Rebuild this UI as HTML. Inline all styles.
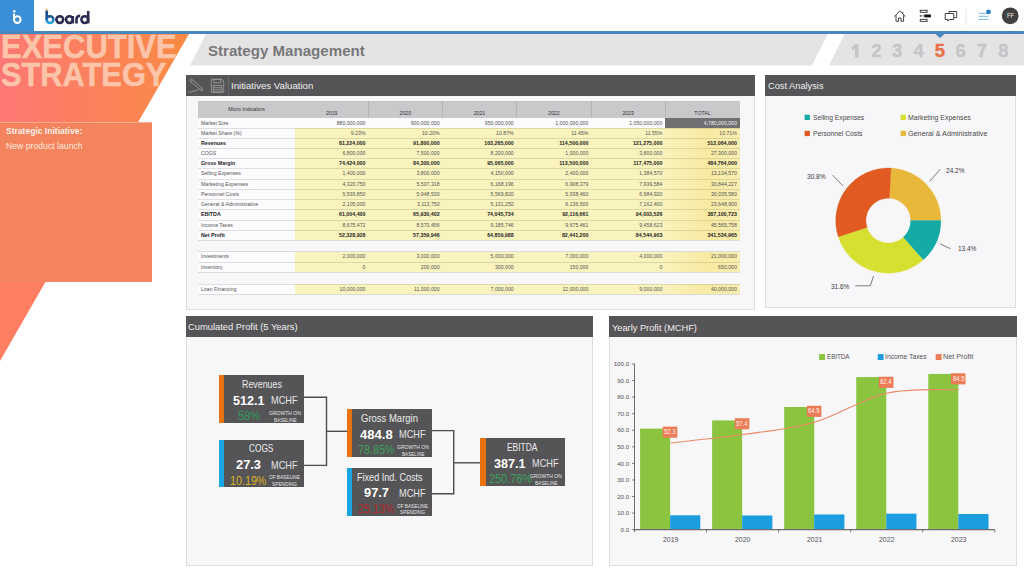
<!DOCTYPE html><html><head><meta charset="utf-8"><style>
*{margin:0;padding:0;box-sizing:border-box}
html,body{width:1024px;height:576px;overflow:hidden;background:#fff;font-family:"Liberation Sans",sans-serif;position:relative}
.a{position:absolute;white-space:nowrap}
.ph{position:absolute;background:#555457;color:#f2f2f2;font-size:9.4px;line-height:22.2px;padding-left:2.5px;white-space:nowrap}
.pb{position:absolute;background:#f7f6f8;border:1px solid #dedede;border-top:none}
.t{position:absolute;white-space:nowrap;font-size:5.2px;line-height:10px;color:#555}
.tb{font-weight:bold;color:#252525;font-size:5.3px}
.kb{position:absolute;background:#545355}
.kb .bar{position:absolute;left:0;top:0;bottom:0;width:5.5px}
</style></head><body>
<svg class="a" style="left:0;top:0" width="1024" height="576">
<defs><linearGradient id="lg" x1="0" y1="0" x2="1" y2="0">
<stop offset="0.04" stop-color="#fd7872"/><stop offset="0.95" stop-color="#f98a46"/></linearGradient></defs>
<polygon points="0,34 189,34 138.2,122 0,122" fill="url(#lg)"/>
<polygon points="0,281 46,281 0,361" fill="#fe7e61"/>
<polygon points="206,34 828,34 812,65.5 190,65.5" fill="#e5e4e4"/>
<polygon points="844.5,34 1024,34 1024,65.5 829,65.5" fill="#e5e4e4"/>
</svg>
<div class="a" style="left:1.10px;top:23.70px;font-size:32.5px;line-height:46px;color:#fcc4a9;font-weight:bold;transform:scaleX(0.9535);transform-origin:0 0;-webkit-text-stroke:0.5px #fcc4a9;">EXECUTIVE</div>
<div class="a" style="left:0.60px;top:51.50px;font-size:32.5px;line-height:46px;color:#fcc4a9;font-weight:bold;transform:scaleX(0.9477);transform-origin:0 0;-webkit-text-stroke:0.5px #fcc4a9;">STRATEGY</div>
<div class="a" style="left:0;top:122px;width:152px;height:160px;background:#f3845e;border-top:1px solid #f9ad8e"></div>
<div class="a" style="left:6.20px;top:125.00px;font-size:8.7px;line-height:13px;color:#fff2ea;font-weight:bold;transform:scaleX(0.9817);transform-origin:0 0;">Strategic Initiative:</div>
<div class="a" style="left:6.30px;top:139.90px;font-size:8.6px;line-height:13px;color:#fee9de;transform:scaleX(1.0089);transform-origin:0 0;">New product launch</div>
<div class="a" style="left:0;top:0;width:1024px;height:32px;background:#fff"></div>
<div class="a" style="left:0;top:0;width:33.5px;height:32px;background:#3a8fd6"></div>
<div class="a" style="left:0;top:31.4px;width:1024px;height:2.8px;background:#4587be"></div>
<svg class="a" style="left:0;top:0" width="1024" height="40">
<g fill="none" stroke="#fff" stroke-width="2">
<circle cx="17.3" cy="19.6" r="3.3"/><line x1="14" y1="13.5" x2="14" y2="20"/></g>
<circle cx="14.3" cy="11.3" r="1.2" fill="#fff"/>
<polygon points="935.5,34 944.5,34 940,38" fill="#4587be"/>
</svg>
<svg class="a" style="left:0;top:0" width="1024" height="34">
<defs><linearGradient id="bg1" x1="0" y1="0" x2="0" y2="1"><stop offset="0" stop-color="#1f4f8f"/><stop offset="1" stop-color="#2aa8e0"/></linearGradient></defs>
<g fill="none" stroke-width="2.6">
<line x1="46.7" y1="10.5" x2="46.7" y2="20" stroke="#1f4f8f"/>
<circle cx="50" cy="19.6" r="3.4" stroke="url(#bg1)"/>
<circle cx="59.8" cy="19.6" r="3.4" stroke="#2b2d4f"/>
<circle cx="69.4" cy="19.6" r="3.4" stroke="#2b2d4f"/>
<line x1="72.8" y1="16" x2="72.8" y2="23.4" stroke="#2b2d4f"/>
<path d="M76.5 23.4 V19.2 Q76.5 15.8 80.2 15.8" stroke="#2b2d4f"/>
<circle cx="84.8" cy="19.6" r="3.4" stroke="#2b2d4f"/>
<line x1="88.2" y1="11" x2="88.2" y2="23.4" stroke="#2b2d4f"/>
</g>
<circle cx="46.6" cy="10" r="1" fill="#f0903a"/>
<g fill="none" stroke="#444" stroke-width="1">
<path d="M894.3 16.7 L899.8 10.8 L905.4 16.7"/>
<path d="M896 15.2 V21.3 H898.5 V18 H901 V21.3 H903.6 V15.2"/>
<line x1="902.8" y1="11.8" x2="902.8" y2="13.7"/>
<rect x="920.3" y="10.3" width="6.8" height="2"/>
<rect x="920.3" y="19.4" width="6.8" height="2"/>
<line x1="921" y1="15.9" x2="924" y2="15.9" stroke-width="0.7"/>
<path d="M949 13.4 V11.5 H956.7 V17.6 H954"/>
<path d="M945.2 13.5 H953.7 V19.5 H949.3 L947.8 21.2 V19.5 H945.2 Z"/>
</g>
<rect x="924.3" y="14.5" width="6.6" height="2.9" fill="#111"/><circle cx="920.4" cy="15.9" r="0.8" fill="#444"/>
<line x1="966" y1="9" x2="966" y2="25" stroke="#e2e2e2" stroke-width="1"/>
<g stroke="#6bb0e3" stroke-width="0.9"><line x1="978.4" y1="13.3" x2="987" y2="13.3"/><line x1="978.4" y1="16.3" x2="988.5" y2="16.3"/><line x1="978.4" y1="19.4" x2="988.5" y2="19.4"/></g>
<circle cx="988.5" cy="11.9" r="2.4" fill="#2a7fc6"/>
<circle cx="1010.2" cy="15.8" r="8.4" fill="#404040"/>
</svg>
<div class="a" style="left:1007.00px;top:10.20px;font-size:7.2px;line-height:11px;color:#efefef;transform:scaleX(0.8197);transform-origin:0 0;">FF</div>
<div class="a" style="left:208.40px;top:40.70px;font-size:14.6px;line-height:21px;color:#78787a;font-weight:bold;transform:scaleX(1.0337);transform-origin:0 0;">Strategy Management</div>
<svg class="a" style="left:0;top:0" width="1024" height="70"><polygon points="854.9,44.3 858.5,44.3 858.5,57.6 854.9,57.6 854.9,48.6 852.1,50.5 851.7,47.3" fill="#c5c5c7"/></svg>
<div class="a" style="left:871.37px;top:38.10px;font-size:18.5px;line-height:26px;color:#c5c5c7;font-weight:bold;-webkit-text-stroke:0.35px #c5c5c7;">2</div>
<div class="a" style="left:892.07px;top:38.10px;font-size:18.5px;line-height:26px;color:#c5c5c7;font-weight:bold;-webkit-text-stroke:0.35px #c5c5c7;">3</div>
<div class="a" style="left:913.47px;top:38.10px;font-size:18.5px;line-height:26px;color:#c5c5c7;font-weight:bold;-webkit-text-stroke:0.35px #c5c5c7;">4</div>
<div class="a" style="left:934.87px;top:38.10px;font-size:18.5px;line-height:26px;color:#e9704a;font-weight:bold;-webkit-text-stroke:0.35px #e9704a;">5</div>
<div class="a" style="left:955.57px;top:38.10px;font-size:18.5px;line-height:26px;color:#c5c5c7;font-weight:bold;-webkit-text-stroke:0.35px #c5c5c7;">6</div>
<div class="a" style="left:976.77px;top:38.10px;font-size:18.5px;line-height:26px;color:#c5c5c7;font-weight:bold;-webkit-text-stroke:0.35px #c5c5c7;">7</div>
<div class="a" style="left:998.27px;top:38.10px;font-size:18.5px;line-height:26px;color:#c5c5c7;font-weight:bold;-webkit-text-stroke:0.35px #c5c5c7;">8</div>
<div class="ph" style="left:186px;top:75px;width:569px;height:21px"></div>
<div class="pb" style="left:186px;top:96px;width:569px;height:213.5px"></div>
<div class="ph" style="left:765px;top:75px;width:251px;height:21px"></div>
<div class="pb" style="left:765px;top:96px;width:251px;height:212px"></div>
<div class="ph" style="left:186px;top:316.3px;width:407px;height:20.7px"></div>
<div class="pb" style="left:186px;top:337px;width:407px;height:228.5px"></div>
<div class="ph" style="left:609px;top:316.3px;width:408px;height:20.7px"></div>
<div class="pb" style="left:609px;top:337px;width:408px;height:228.5px"></div>
<div class="a" style="left:231.40px;top:79.30px;font-size:9.9px;line-height:14px;color:#f0f0f0;transform:scaleX(0.9758);transform-origin:0 0;">Initiatives Valuation</div>
<div class="a" style="left:768.30px;top:79.20px;font-size:9.9px;line-height:14px;color:#f0f0f0;transform:scaleX(0.9369);transform-origin:0 0;">Cost Analysis</div>
<div class="a" style="left:188.40px;top:320.40px;font-size:9.9px;line-height:14px;color:#f0f0f0;transform:scaleX(0.9464);transform-origin:0 0;">Cumulated Profit (5 Years)</div>
<div class="a" style="left:612.20px;top:320.50px;font-size:9.9px;line-height:14px;color:#f0f0f0;transform:scaleX(0.9359);transform-origin:0 0;">Yearly Profit (MCHF)</div>
<svg class="a" style="left:186px;top:75px" width="50" height="21">
<g fill="none" stroke="#9a9a9a" stroke-width="0.9">
<path d="M3.5 5.5 L5.3 3.8 L16.6 13.6 L16.5 15.4 L14.8 15.3 Z"/>
<line x1="4.5" y1="7" x2="6.6" y2="5"/>
<line x1="14.6" y1="13" x2="13" y2="14.6"/>
<path d="M2.5 17.5 L12 15"/>
<path d="M25.3 4.3 H36 L37.7 6 V17.2 H25.3 Z"/>
<rect x="28" y="4.3" width="6.8" height="3.5"/>
<rect x="27.3" y="10.5" width="8.5" height="6.7"/>
<line x1="28" y1="12.7" x2="35" y2="12.7"/><line x1="28" y1="14.8" x2="35" y2="14.8"/>
</g>
<line x1="42.5" y1="0" x2="42.5" y2="21" stroke="#6a696c" stroke-width="1"/>
</svg>
<div class="a" style="left:198px;top:101.2px;width:541.7px;height:16.5px;background:#c9c8cb"></div>
<div class="a" style="left:367.8px;top:101.2px;width:1px;height:16.5px;background:#b5b4b7"></div>
<div class="a" style="left:441.9px;top:101.2px;width:1px;height:16.5px;background:#b5b4b7"></div>
<div class="a" style="left:516.0px;top:101.2px;width:1px;height:16.5px;background:#b5b4b7"></div>
<div class="a" style="left:590.7px;top:101.2px;width:1px;height:16.5px;background:#b5b4b7"></div>
<div class="a" style="left:664.7px;top:101.2px;width:1px;height:16.5px;background:#b5b4b7"></div>
<div class="t" style="left:198px;top:104px;width:97px;text-align:center;color:#333">Micro Indicators</div>
<div class="t" style="left:295px;top:108px;width:73.30000000000001px;text-align:center;color:#333">2019</div>
<div class="t" style="left:368.3px;top:108px;width:74.09999999999997px;text-align:center;color:#333">2020</div>
<div class="t" style="left:442.4px;top:108px;width:74.10000000000002px;text-align:center;color:#333">2021</div>
<div class="t" style="left:516.5px;top:108px;width:74.70000000000005px;text-align:center;color:#333">2022</div>
<div class="t" style="left:591.2px;top:108px;width:74.0px;text-align:center;color:#333">2023</div>
<div class="t" style="left:665.2px;top:108px;width:74.5px;text-align:center;color:#333">TOTAL</div>
<div class="a" style="left:198px;top:117.7px;width:541.7px;height:10.299999999999997px;background:#fcfbfd"></div>
<div class="a" style="left:665.2px;top:117.7px;width:74.5px;height:10.299999999999997px;background:#706f72"></div>
<div class="t" style="left:201px;top:118px">Market Size</div>
<div class="t" style="left:295px;top:118px;width:70.50000000000001px;text-align:right">880,000,000</div>
<div class="t" style="left:368.3px;top:118px;width:71.29999999999997px;text-align:right">900,000,000</div>
<div class="t" style="left:442.4px;top:118px;width:71.30000000000003px;text-align:right">950,000,000</div>
<div class="t" style="left:516.5px;top:118px;width:71.90000000000005px;text-align:right">1,000,000,000</div>
<div class="t" style="left:591.2px;top:118px;width:71.2px;text-align:right">1,050,000,000</div>
<div class="t" style="left:665.2px;top:118px;width:71.7px;text-align:right;color:#f4f4f4">4,780,000,000</div>
<div class="a" style="left:198px;top:128px;width:97px;height:10px;background:#fcfbfd"></div>
<div class="a" style="left:295px;top:128px;width:370.20000000000005px;height:10px;background:#f9f3be"></div>
<div class="a" style="left:665.2px;top:128px;width:74.5px;height:10px;background:linear-gradient(90deg,#f9f2bb,#f7eaa2 55%,#f8eeb0)"></div>
<div class="t" style="left:201px;top:128px">Market Share (%)</div>
<div class="t" style="left:295px;top:128px;width:70.50000000000001px;text-align:right">9.23%</div>
<div class="t" style="left:368.3px;top:128px;width:71.29999999999997px;text-align:right">10.20%</div>
<div class="t" style="left:442.4px;top:128px;width:71.30000000000003px;text-align:right">10.87%</div>
<div class="t" style="left:516.5px;top:128px;width:71.90000000000005px;text-align:right">11.45%</div>
<div class="t" style="left:591.2px;top:128px;width:71.2px;text-align:right">11.55%</div>
<div class="t" style="left:665.2px;top:128px;width:71.7px;text-align:right">10.71%</div>
<div class="a" style="left:198px;top:138px;width:97px;height:10px;background:#fcfbfd"></div>
<div class="a" style="left:295px;top:138px;width:370.20000000000005px;height:10px;background:#f9f3be"></div>
<div class="a" style="left:665.2px;top:138px;width:74.5px;height:10px;background:linear-gradient(90deg,#f9f2bb,#f7eaa2 55%,#f8eeb0)"></div>
<div class="t tb" style="left:201px;top:138px">Revenues</div>
<div class="t tb" style="left:295px;top:138px;width:70.50000000000001px;text-align:right">81,224,000</div>
<div class="t tb" style="left:368.3px;top:138px;width:71.29999999999997px;text-align:right">91,800,000</div>
<div class="t tb" style="left:442.4px;top:138px;width:71.30000000000003px;text-align:right">103,265,000</div>
<div class="t tb" style="left:516.5px;top:138px;width:71.90000000000005px;text-align:right">114,500,000</div>
<div class="t tb" style="left:591.2px;top:138px;width:71.2px;text-align:right">121,275,000</div>
<div class="t tb" style="left:665.2px;top:138px;width:71.7px;text-align:right">512,064,000</div>
<div class="a" style="left:198px;top:148px;width:97px;height:10px;background:#fcfbfd"></div>
<div class="a" style="left:295px;top:148px;width:370.20000000000005px;height:10px;background:#f9f3be"></div>
<div class="a" style="left:665.2px;top:148px;width:74.5px;height:10px;background:linear-gradient(90deg,#f9f2bb,#f7eaa2 55%,#f8eeb0)"></div>
<div class="t" style="left:201px;top:148px">COGS</div>
<div class="t" style="left:295px;top:148px;width:70.50000000000001px;text-align:right">6,800,000</div>
<div class="t" style="left:368.3px;top:148px;width:71.29999999999997px;text-align:right">7,500,000</div>
<div class="t" style="left:442.4px;top:148px;width:71.30000000000003px;text-align:right">8,200,000</div>
<div class="t" style="left:516.5px;top:148px;width:71.90000000000005px;text-align:right">1,000,000</div>
<div class="t" style="left:591.2px;top:148px;width:71.2px;text-align:right">3,800,000</div>
<div class="t" style="left:665.2px;top:148px;width:71.7px;text-align:right">27,300,000</div>
<div class="a" style="left:198px;top:158px;width:97px;height:10px;background:#fcfbfd"></div>
<div class="a" style="left:295px;top:158px;width:370.20000000000005px;height:10px;background:#f9f3be"></div>
<div class="a" style="left:665.2px;top:158px;width:74.5px;height:10px;background:linear-gradient(90deg,#f9f2bb,#f7eaa2 55%,#f8eeb0)"></div>
<div class="t tb" style="left:201px;top:158px">Gross Margin</div>
<div class="t tb" style="left:295px;top:158px;width:70.50000000000001px;text-align:right">74,424,000</div>
<div class="t tb" style="left:368.3px;top:158px;width:71.29999999999997px;text-align:right">84,300,000</div>
<div class="t tb" style="left:442.4px;top:158px;width:71.30000000000003px;text-align:right">95,065,000</div>
<div class="t tb" style="left:516.5px;top:158px;width:71.90000000000005px;text-align:right">113,500,000</div>
<div class="t tb" style="left:591.2px;top:158px;width:71.2px;text-align:right">117,475,000</div>
<div class="t tb" style="left:665.2px;top:158px;width:71.7px;text-align:right">484,764,000</div>
<div class="a" style="left:198px;top:168px;width:97px;height:11px;background:#fcfbfd"></div>
<div class="a" style="left:295px;top:168px;width:370.20000000000005px;height:11px;background:#f9f3be"></div>
<div class="a" style="left:665.2px;top:168px;width:74.5px;height:11px;background:linear-gradient(90deg,#f9f2bb,#f7eaa2 55%,#f8eeb0)"></div>
<div class="t" style="left:201px;top:168px">Selling Expenses</div>
<div class="t" style="left:295px;top:168px;width:70.50000000000001px;text-align:right">1,400,000</div>
<div class="t" style="left:368.3px;top:168px;width:71.29999999999997px;text-align:right">3,800,000</div>
<div class="t" style="left:442.4px;top:168px;width:71.30000000000003px;text-align:right">4,150,000</div>
<div class="t" style="left:516.5px;top:168px;width:71.90000000000005px;text-align:right">2,400,000</div>
<div class="t" style="left:591.2px;top:168px;width:71.2px;text-align:right">1,384,570</div>
<div class="t" style="left:665.2px;top:168px;width:71.7px;text-align:right">13,134,570</div>
<div class="a" style="left:198px;top:179px;width:97px;height:10px;background:#fcfbfd"></div>
<div class="a" style="left:295px;top:179px;width:370.20000000000005px;height:10px;background:#f9f3be"></div>
<div class="a" style="left:665.2px;top:179px;width:74.5px;height:10px;background:linear-gradient(90deg,#f9f2bb,#f7eaa2 55%,#f8eeb0)"></div>
<div class="t" style="left:201px;top:179px">Marketing Expenses</div>
<div class="t" style="left:295px;top:179px;width:70.50000000000001px;text-align:right">4,320,750</div>
<div class="t" style="left:368.3px;top:179px;width:71.29999999999997px;text-align:right">5,507,318</div>
<div class="t" style="left:442.4px;top:179px;width:71.30000000000003px;text-align:right">6,168,196</div>
<div class="t" style="left:516.5px;top:179px;width:71.90000000000005px;text-align:right">6,908,379</div>
<div class="t" style="left:591.2px;top:179px;width:71.2px;text-align:right">7,939,584</div>
<div class="t" style="left:665.2px;top:179px;width:71.7px;text-align:right">30,844,227</div>
<div class="a" style="left:198px;top:189px;width:97px;height:10px;background:#fcfbfd"></div>
<div class="a" style="left:295px;top:189px;width:370.20000000000005px;height:10px;background:#f9f3be"></div>
<div class="a" style="left:665.2px;top:189px;width:74.5px;height:10px;background:linear-gradient(90deg,#f9f2bb,#f7eaa2 55%,#f8eeb0)"></div>
<div class="t" style="left:201px;top:189px">Personnel Costs</div>
<div class="t" style="left:295px;top:189px;width:70.50000000000001px;text-align:right">5,593,850</div>
<div class="t" style="left:368.3px;top:189px;width:71.29999999999997px;text-align:right">5,948,530</div>
<div class="t" style="left:442.4px;top:189px;width:71.30000000000003px;text-align:right">5,569,820</div>
<div class="t" style="left:516.5px;top:189px;width:71.90000000000005px;text-align:right">5,938,460</div>
<div class="t" style="left:591.2px;top:189px;width:71.2px;text-align:right">6,984,920</div>
<div class="t" style="left:665.2px;top:189px;width:71.7px;text-align:right">30,035,580</div>
<div class="a" style="left:198px;top:199px;width:97px;height:10px;background:#fcfbfd"></div>
<div class="a" style="left:295px;top:199px;width:370.20000000000005px;height:10px;background:#f9f3be"></div>
<div class="a" style="left:665.2px;top:199px;width:74.5px;height:10px;background:linear-gradient(90deg,#f9f2bb,#f7eaa2 55%,#f8eeb0)"></div>
<div class="t" style="left:201px;top:199px">General &amp; Administrative</div>
<div class="t" style="left:295px;top:199px;width:70.50000000000001px;text-align:right">2,105,000</div>
<div class="t" style="left:368.3px;top:199px;width:71.29999999999997px;text-align:right">3,113,750</div>
<div class="t" style="left:442.4px;top:199px;width:71.30000000000003px;text-align:right">5,131,250</div>
<div class="t" style="left:516.5px;top:199px;width:71.90000000000005px;text-align:right">6,136,500</div>
<div class="t" style="left:591.2px;top:199px;width:71.2px;text-align:right">7,162,400</div>
<div class="t" style="left:665.2px;top:199px;width:71.7px;text-align:right">23,648,900</div>
<div class="a" style="left:198px;top:209px;width:97px;height:11px;background:#fcfbfd"></div>
<div class="a" style="left:295px;top:209px;width:370.20000000000005px;height:11px;background:#f9f3be"></div>
<div class="a" style="left:665.2px;top:209px;width:74.5px;height:11px;background:linear-gradient(90deg,#f9f2bb,#f7eaa2 55%,#f8eeb0)"></div>
<div class="t tb" style="left:201px;top:209px">EBITDA</div>
<div class="t tb" style="left:295px;top:209px;width:70.50000000000001px;text-align:right">61,004,400</div>
<div class="t tb" style="left:368.3px;top:209px;width:71.29999999999997px;text-align:right">65,930,402</div>
<div class="t tb" style="left:442.4px;top:209px;width:71.30000000000003px;text-align:right">74,045,734</div>
<div class="t tb" style="left:516.5px;top:209px;width:71.90000000000005px;text-align:right">92,116,661</div>
<div class="t tb" style="left:591.2px;top:209px;width:71.2px;text-align:right">94,003,526</div>
<div class="t tb" style="left:665.2px;top:209px;width:71.7px;text-align:right">387,100,723</div>
<div class="a" style="left:198px;top:220px;width:97px;height:10px;background:#fcfbfd"></div>
<div class="a" style="left:295px;top:220px;width:370.20000000000005px;height:10px;background:#f9f3be"></div>
<div class="a" style="left:665.2px;top:220px;width:74.5px;height:10px;background:linear-gradient(90deg,#f9f2bb,#f7eaa2 55%,#f8eeb0)"></div>
<div class="t" style="left:201px;top:220px">Income Taxes</div>
<div class="t" style="left:295px;top:220px;width:70.50000000000001px;text-align:right">8,675,472</div>
<div class="t" style="left:368.3px;top:220px;width:71.29999999999997px;text-align:right">8,570,456</div>
<div class="t" style="left:442.4px;top:220px;width:71.30000000000003px;text-align:right">9,185,746</div>
<div class="t" style="left:516.5px;top:220px;width:71.90000000000005px;text-align:right">9,675,461</div>
<div class="t" style="left:591.2px;top:220px;width:71.2px;text-align:right">9,458,623</div>
<div class="t" style="left:665.2px;top:220px;width:71.7px;text-align:right">45,565,758</div>
<div class="a" style="left:198px;top:230px;width:97px;height:10px;background:#fcfbfd"></div>
<div class="a" style="left:295px;top:230px;width:370.20000000000005px;height:10px;background:#f9f3be"></div>
<div class="a" style="left:665.2px;top:230px;width:74.5px;height:10px;background:linear-gradient(90deg,#f9f2bb,#f7eaa2 55%,#f8eeb0)"></div>
<div class="t tb" style="left:201px;top:230px">Net Profit</div>
<div class="t tb" style="left:295px;top:230px;width:70.50000000000001px;text-align:right">52,328,928</div>
<div class="t tb" style="left:368.3px;top:230px;width:71.29999999999997px;text-align:right">57,359,946</div>
<div class="t tb" style="left:442.4px;top:230px;width:71.30000000000003px;text-align:right">64,859,988</div>
<div class="t tb" style="left:516.5px;top:230px;width:71.90000000000005px;text-align:right">82,441,200</div>
<div class="t tb" style="left:591.2px;top:230px;width:71.2px;text-align:right">84,544,903</div>
<div class="t tb" style="left:665.2px;top:230px;width:71.7px;text-align:right">341,534,965</div>
<div class="a" style="left:198px;top:251.5px;width:97px;height:10.5px;background:#fcfbfd"></div>
<div class="a" style="left:295px;top:251.5px;width:370.20000000000005px;height:10.5px;background:#f9f3be"></div>
<div class="a" style="left:665.2px;top:251.5px;width:74.5px;height:10.5px;background:linear-gradient(90deg,#f9f2bb,#f7eaa2 55%,#f8eeb0)"></div>
<div class="t" style="left:201px;top:251px">Investments</div>
<div class="t" style="left:295px;top:251px;width:70.50000000000001px;text-align:right">2,000,000</div>
<div class="t" style="left:368.3px;top:251px;width:71.29999999999997px;text-align:right">3,000,000</div>
<div class="t" style="left:442.4px;top:251px;width:71.30000000000003px;text-align:right">5,000,000</div>
<div class="t" style="left:516.5px;top:251px;width:71.90000000000005px;text-align:right">7,000,000</div>
<div class="t" style="left:591.2px;top:251px;width:71.2px;text-align:right">4,000,000</div>
<div class="t" style="left:665.2px;top:251px;width:71.7px;text-align:right">21,000,000</div>
<div class="a" style="left:198px;top:262px;width:97px;height:10.300000000000011px;background:#fcfbfd"></div>
<div class="a" style="left:295px;top:262px;width:370.20000000000005px;height:10.300000000000011px;background:#f9f3be"></div>
<div class="a" style="left:665.2px;top:262px;width:74.5px;height:10.300000000000011px;background:linear-gradient(90deg,#f9f2bb,#f7eaa2 55%,#f8eeb0)"></div>
<div class="t" style="left:201px;top:262px">Inventory</div>
<div class="t" style="left:295px;top:262px;width:70.50000000000001px;text-align:right">0</div>
<div class="t" style="left:368.3px;top:262px;width:71.29999999999997px;text-align:right">200,000</div>
<div class="t" style="left:442.4px;top:262px;width:71.30000000000003px;text-align:right">300,000</div>
<div class="t" style="left:516.5px;top:262px;width:71.90000000000005px;text-align:right">150,000</div>
<div class="t" style="left:591.2px;top:262px;width:71.2px;text-align:right">0</div>
<div class="t" style="left:665.2px;top:262px;width:71.7px;text-align:right">650,000</div>
<div class="a" style="left:198px;top:284px;width:97px;height:10.300000000000011px;background:#fcfbfd"></div>
<div class="a" style="left:295px;top:284px;width:370.20000000000005px;height:10.300000000000011px;background:#f9f3be"></div>
<div class="a" style="left:665.2px;top:284px;width:74.5px;height:10.300000000000011px;background:linear-gradient(90deg,#f9f2bb,#f7eaa2 55%,#f8eeb0)"></div>
<div class="t" style="left:201px;top:284px">Loan Financing</div>
<div class="t" style="left:295px;top:284px;width:70.50000000000001px;text-align:right">10,000,000</div>
<div class="t" style="left:368.3px;top:284px;width:71.29999999999997px;text-align:right">11,000,000</div>
<div class="t" style="left:442.4px;top:284px;width:71.30000000000003px;text-align:right">7,000,000</div>
<div class="t" style="left:516.5px;top:284px;width:71.90000000000005px;text-align:right">12,000,000</div>
<div class="t" style="left:591.2px;top:284px;width:71.2px;text-align:right">9,000,000</div>
<div class="t" style="left:665.2px;top:284px;width:71.7px;text-align:right">40,000,000</div>
<div class="a" style="left:198px;top:128px;width:541.7px;height:1px;background:rgba(60,60,40,0.14)"></div>
<div class="a" style="left:198px;top:138px;width:541.7px;height:1px;background:rgba(60,60,40,0.14)"></div>
<div class="a" style="left:198px;top:148px;width:541.7px;height:1px;background:rgba(60,60,40,0.14)"></div>
<div class="a" style="left:198px;top:158px;width:541.7px;height:1px;background:rgba(60,60,40,0.14)"></div>
<div class="a" style="left:198px;top:168px;width:541.7px;height:1px;background:rgba(60,60,40,0.14)"></div>
<div class="a" style="left:198px;top:179px;width:541.7px;height:1px;background:rgba(60,60,40,0.14)"></div>
<div class="a" style="left:198px;top:189px;width:541.7px;height:1px;background:rgba(60,60,40,0.14)"></div>
<div class="a" style="left:198px;top:199px;width:541.7px;height:1px;background:rgba(60,60,40,0.14)"></div>
<div class="a" style="left:198px;top:209px;width:541.7px;height:1px;background:rgba(60,60,40,0.14)"></div>
<div class="a" style="left:198px;top:220px;width:541.7px;height:1px;background:rgba(60,60,40,0.14)"></div>
<div class="a" style="left:198px;top:230px;width:541.7px;height:1px;background:rgba(60,60,40,0.14)"></div>
<div class="a" style="left:198px;top:240px;width:541.7px;height:1px;background:rgba(60,60,40,0.14)"></div>
<div class="a" style="left:198px;top:262px;width:541.7px;height:1px;background:rgba(60,60,40,0.14)"></div>
<div class="a" style="left:198px;top:251px;width:541.7px;height:1px;background:rgba(60,60,40,0.14)"></div>
<div class="a" style="left:198px;top:272px;width:541.7px;height:1px;background:rgba(60,60,40,0.14)"></div>
<div class="a" style="left:198px;top:294px;width:541.7px;height:1px;background:rgba(60,60,40,0.14)"></div>
<div class="a" style="left:198px;top:284px;width:541.7px;height:1px;background:rgba(60,60,40,0.14)"></div>
<svg class="a" style="left:0;top:0" width="1024" height="576">
<path d="M891.05 168.07 A52.6 52.6 0 0 1 940.90 220.60 L910.70 220.60 A22.4 22.4 0 0 0 889.47 198.23 Z" fill="#e8b83a" stroke="#e8b83a" stroke-width="0.3"/>
<path d="M940.90 220.60 A52.6 52.6 0 0 1 923.15 260.00 L903.14 237.38 A22.4 22.4 0 0 0 910.70 220.60 Z" fill="#15aaa6" stroke="#15aaa6" stroke-width="0.3"/>
<path d="M923.15 260.00 A52.6 52.6 0 0 1 838.27 236.85 L867.00 227.52 A22.4 22.4 0 0 0 903.14 237.38 Z" fill="#d6e030" stroke="#d6e030" stroke-width="0.3"/>
<path d="M838.27 236.85 A52.6 52.6 0 0 1 891.05 168.07 L889.47 198.23 A22.4 22.4 0 0 0 867.00 227.52 Z" fill="#e05a22" stroke="#e05a22" stroke-width="0.3"/>
<g fill="none" stroke="#707070" stroke-width="0.9">
<polyline points="929.7,181.4 940.2,169.1"/>
<polyline points="940.3,244 950.5,248.7"/>
<polyline points="873.6,276 870.3,285.8 855.2,285.8"/>
<polyline points="843,186 832.5,175"/>
</g>
<rect x="804.6" y="114.7" width="5.3" height="5.3" fill="#15aaa6"/>
<rect x="900.6" y="114.7" width="5.3" height="5.3" fill="#d6e030"/>
<rect x="804.6" y="130.8" width="5.3" height="5.3" fill="#e05a22"/>
<rect x="900.6" y="130.8" width="5.3" height="5.3" fill="#e8b83a"/>
</svg>
<div class="a" style="left:812.60px;top:112.00px;font-size:8.0px;line-height:12px;color:#4a4a4a;transform:scaleX(0.8328);transform-origin:0 0;">Selling Expenses</div>
<div class="a" style="left:908.20px;top:112.00px;font-size:8.0px;line-height:12px;color:#4a4a4a;transform:scaleX(0.8664);transform-origin:0 0;">Marketing Expenses</div>
<div class="a" style="left:812.60px;top:127.90px;font-size:8.0px;line-height:12px;color:#4a4a4a;transform:scaleX(0.8419);transform-origin:0 0;">Personnel Costs</div>
<div class="a" style="left:908.20px;top:127.90px;font-size:8.0px;line-height:12px;color:#4a4a4a;transform:scaleX(0.9019);transform-origin:0 0;">General &amp; Administrative</div>
<div class="a" style="left:946.20px;top:166.20px;font-size:7.1px;line-height:10px;color:#3a3a3a;transform:scaleX(0.9191);transform-origin:0 0;">24.2%</div>
<div class="a" style="left:957.50px;top:244.40px;font-size:7.1px;line-height:10px;color:#3a3a3a;transform:scaleX(0.9141);transform-origin:0 0;">13.4%</div>
<div class="a" style="left:830.60px;top:281.90px;font-size:7.1px;line-height:10px;color:#3a3a3a;transform:scaleX(0.9092);transform-origin:0 0;">31.6%</div>
<div class="a" style="left:807.40px;top:171.80px;font-size:7.1px;line-height:10px;color:#3a3a3a;transform:scaleX(0.9241);transform-origin:0 0;">30.8%</div>
<svg class="a" style="left:0;top:0" width="1024" height="576"><g fill="none" stroke="#4d4d4f" stroke-width="1.4">
<polyline points="304,397.3 326.5,397.3 326.5,465.4 304,465.4"/><line x1="326.5" y1="431.3" x2="347" y2="431.3"/>
<polyline points="432,430.6 453.7,430.6 453.7,493.7 432,493.7"/><line x1="453.7" y1="462.8" x2="480.4" y2="462.8"/>
</g></svg>
<div class="a" style="left:218.9px;top:375.4px;width:85.1px;height:47.900000000000034px;background:#555457"></div>
<div class="a" style="left:218.9px;top:375.4px;width:5.4px;height:47.900000000000034px;background:#e8730e"></div>
<div class="a" style="left:241.50px;top:376.80px;font-size:10.1px;line-height:15px;color:#ececec;transform:scaleX(0.8769);transform-origin:0 0;">Revenues</div>
<div class="a" style="left:232.90px;top:391.60px;font-size:12.3px;line-height:18px;color:#ffffff;font-weight:bold;transform:scaleX(1.0191);transform-origin:0 0;">512.1</div>
<div class="a" style="left:271.20px;top:392.40px;font-size:11.0px;line-height:16px;color:#e6e6e6;transform:scaleX(0.8367);transform-origin:0 0;">MCHF</div>
<div class="a" style="left:237.65px;top:408.20px;font-size:12.0px;line-height:17px;color:#2f9d5a;transform:scaleX(0.9125);transform-origin:0 0;">58%</div>
<div class="a" style="left:268.85px;top:408.80px;font-size:5.4px;line-height:8px;color:#e6e6e6;transform:scaleX(0.9325);transform-origin:0 0;">GROWTH ON</div>
<div class="a" style="left:273.50px;top:415.60px;font-size:5.4px;line-height:8px;color:#e6e6e6;transform:scaleX(0.8559);transform-origin:0 0;">BASELINE</div>
<div class="a" style="left:218.9px;top:439.7px;width:85.1px;height:47.10000000000002px;background:#555457"></div>
<div class="a" style="left:218.9px;top:439.7px;width:5.4px;height:47.10000000000002px;background:#18a6e4"></div>
<div class="a" style="left:249.25px;top:441.10px;font-size:10.1px;line-height:15px;color:#ececec;transform:scaleX(0.8203);transform-origin:0 0;">COGS</div>
<div class="a" style="left:236.10px;top:455.90px;font-size:12.3px;line-height:18px;color:#ffffff;font-weight:bold;transform:scaleX(1.0450);transform-origin:0 0;">27.3</div>
<div class="a" style="left:271.20px;top:456.70px;font-size:11.0px;line-height:16px;color:#e6e6e6;transform:scaleX(0.8367);transform-origin:0 0;">MCHF</div>
<div class="a" style="left:230.40px;top:472.50px;font-size:12.0px;line-height:17px;color:#deb426;transform:scaleX(0.8948);transform-origin:0 0;">10.19%</div>
<div class="a" style="left:269.35px;top:473.10px;font-size:5.4px;line-height:8px;color:#e6e6e6;transform:scaleX(0.8723);transform-origin:0 0;">OF BASELINE</div>
<div class="a" style="left:272.25px;top:479.90px;font-size:5.4px;line-height:8px;color:#e6e6e6;transform:scaleX(0.8896);transform-origin:0 0;">SPENDING</div>
<div class="a" style="left:346.9px;top:409.4px;width:85.10000000000002px;height:47.400000000000034px;background:#555457"></div>
<div class="a" style="left:346.9px;top:409.4px;width:5.4px;height:47.400000000000034px;background:#e8730e"></div>
<div class="a" style="left:360.95px;top:410.80px;font-size:10.1px;line-height:15px;color:#ececec;transform:scaleX(0.9406);transform-origin:0 0;">Gross Margin</div>
<div class="a" style="left:360.20px;top:425.60px;font-size:12.3px;line-height:18px;color:#ffffff;font-weight:bold;transform:scaleX(1.0645);transform-origin:0 0;">484.8</div>
<div class="a" style="left:399.20px;top:426.40px;font-size:11.0px;line-height:16px;color:#e6e6e6;transform:scaleX(0.8367);transform-origin:0 0;">MCHF</div>
<div class="a" style="left:358.40px;top:442.20px;font-size:12.0px;line-height:17px;color:#3ba35c;transform:scaleX(0.8948);transform-origin:0 0;">78.85%</div>
<div class="a" style="left:396.85px;top:442.80px;font-size:5.4px;line-height:8px;color:#e6e6e6;transform:scaleX(0.9325);transform-origin:0 0;">GROWTH ON</div>
<div class="a" style="left:401.50px;top:449.60px;font-size:5.4px;line-height:8px;color:#e6e6e6;transform:scaleX(0.8559);transform-origin:0 0;">BASELINE</div>
<div class="a" style="left:346.9px;top:468.2px;width:85.10000000000002px;height:47.599999999999966px;background:#555457"></div>
<div class="a" style="left:346.9px;top:468.2px;width:5.4px;height:47.599999999999966px;background:#18a6e4"></div>
<div class="a" style="left:356.60px;top:469.60px;font-size:10.1px;line-height:15px;color:#ececec;transform:scaleX(0.9003);transform-origin:0 0;">Fixed Ind. Costs</div>
<div class="a" style="left:364.10px;top:484.40px;font-size:12.3px;line-height:18px;color:#ffffff;font-weight:bold;transform:scaleX(1.0450);transform-origin:0 0;">97.7</div>
<div class="a" style="left:399.20px;top:485.20px;font-size:11.0px;line-height:16px;color:#e6e6e6;transform:scaleX(0.8367);transform-origin:0 0;">MCHF</div>
<div class="a" style="left:358.40px;top:501.00px;font-size:12.0px;line-height:17px;color:#b32828;transform:scaleX(0.8948);transform-origin:0 0;">25.13%</div>
<div class="a" style="left:397.35px;top:501.60px;font-size:5.4px;line-height:8px;color:#e6e6e6;transform:scaleX(0.8723);transform-origin:0 0;">OF BASELINE</div>
<div class="a" style="left:400.25px;top:508.40px;font-size:5.4px;line-height:8px;color:#e6e6e6;transform:scaleX(0.8896);transform-origin:0 0;">SPENDING</div>
<div class="a" style="left:480.4px;top:438.4px;width:84.60000000000002px;height:47.200000000000045px;background:#555457"></div>
<div class="a" style="left:480.4px;top:438.4px;width:5.4px;height:47.200000000000045px;background:#e8730e"></div>
<div class="a" style="left:507.45px;top:439.80px;font-size:10.1px;line-height:15px;color:#ececec;transform:scaleX(0.8354);transform-origin:0 0;">EBITDA</div>
<div class="a" style="left:494.30px;top:454.60px;font-size:12.3px;line-height:18px;color:#ffffff;font-weight:bold;transform:scaleX(1.0256);transform-origin:0 0;">387.1</div>
<div class="a" style="left:532.20px;top:455.40px;font-size:11.0px;line-height:16px;color:#e6e6e6;transform:scaleX(0.8367);transform-origin:0 0;">MCHF</div>
<div class="a" style="left:488.60px;top:471.20px;font-size:12.0px;line-height:17px;color:#3ba35c;transform:scaleX(0.9072);transform-origin:0 0;">250.76%</div>
<div class="a" style="left:529.85px;top:471.80px;font-size:5.4px;line-height:8px;color:#e6e6e6;transform:scaleX(0.9325);transform-origin:0 0;">GROWTH ON</div>
<div class="a" style="left:534.50px;top:478.60px;font-size:5.4px;line-height:8px;color:#e6e6e6;transform:scaleX(0.8559);transform-origin:0 0;">BASELINE</div>
<svg class="a" style="left:0;top:0" width="1024" height="576">
<rect x="640.10" y="428.62" width="30" height="101.08" fill="#8bc43f"/>
<rect x="670.10" y="515.32" width="30.2" height="14.38" fill="#1b9ddf"/>
<rect x="712.15" y="420.45" width="30" height="109.25" fill="#8bc43f"/>
<rect x="742.15" y="515.50" width="30.2" height="14.20" fill="#1b9ddf"/>
<rect x="784.20" y="407.00" width="30" height="122.70" fill="#8bc43f"/>
<rect x="814.20" y="514.47" width="30.2" height="15.23" fill="#1b9ddf"/>
<rect x="856.25" y="377.06" width="30" height="152.64" fill="#8bc43f"/>
<rect x="886.25" y="513.66" width="30.2" height="16.04" fill="#1b9ddf"/>
<rect x="928.30" y="373.94" width="30" height="155.76" fill="#8bc43f"/>
<rect x="958.30" y="514.02" width="30.2" height="15.68" fill="#1b9ddf"/>
<g stroke="#6d6d6f" stroke-width="1" fill="none">
<line x1="634.5" y1="363.5" x2="634.5" y2="530.2"/>
<line x1="634.0" y1="529.7" x2="994.7" y2="529.7" stroke-width="1.2"/>
<line x1="632.2" y1="529.70" x2="634.5" y2="529.70"/>
<line x1="632.2" y1="513.13" x2="634.5" y2="513.13"/>
<line x1="632.2" y1="496.56" x2="634.5" y2="496.56"/>
<line x1="632.2" y1="479.99" x2="634.5" y2="479.99"/>
<line x1="632.2" y1="463.42" x2="634.5" y2="463.42"/>
<line x1="632.2" y1="446.85" x2="634.5" y2="446.85"/>
<line x1="632.2" y1="430.28" x2="634.5" y2="430.28"/>
<line x1="632.2" y1="413.71" x2="634.5" y2="413.71"/>
<line x1="632.2" y1="397.14" x2="634.5" y2="397.14"/>
<line x1="632.2" y1="380.57" x2="634.5" y2="380.57"/>
<line x1="632.2" y1="364.00" x2="634.5" y2="364.00"/>
<line x1="634.50" y1="529.7" x2="634.50" y2="532.2"/>
<line x1="706.55" y1="529.7" x2="706.55" y2="532.2"/>
<line x1="778.60" y1="529.7" x2="778.60" y2="532.2"/>
<line x1="850.65" y1="529.7" x2="850.65" y2="532.2"/>
<line x1="922.70" y1="529.7" x2="922.70" y2="532.2"/>
<line x1="994.75" y1="529.7" x2="994.75" y2="532.2"/>
</g>
<path d="M670.50 443.04 C682.51 441.63 718.53 438.07 742.55 434.59 C766.57 431.11 790.58 429.06 814.60 422.16 C838.62 415.26 862.63 398.58 886.65 393.16 C910.67 387.75 946.69 390.26 958.70 389.68" fill="none" stroke="#ec8864" stroke-width="1.05"/>
<rect x="662.70" y="426.64" width="14.6" height="11.1" fill="#ec7c57"/>
<rect x="734.75" y="418.19" width="14.6" height="11.1" fill="#ec7c57"/>
<rect x="806.80" y="405.76" width="14.6" height="11.1" fill="#ec7c57"/>
<rect x="878.85" y="376.76" width="14.6" height="11.1" fill="#ec7c57"/>
<rect x="950.90" y="373.28" width="14.6" height="11.1" fill="#ec7c57"/>
<rect x="819.1" y="354.1" width="5.9" height="5.9" fill="#8bc43f"/>
<rect x="877.7" y="354.1" width="5.9" height="5.9" fill="#1b9ddf"/>
<rect x="935.7" y="354.1" width="5.9" height="5.9" fill="#ec7c57"/>
</svg>
<div class="a" style="left:664.30px;top:427.34px;font-size:6.8px;line-height:10px;color:#fff3ec;transform:scaleX(0.8619);transform-origin:0 0;">52.3</div>
<div class="a" style="left:736.35px;top:418.89px;font-size:6.8px;line-height:10px;color:#fff3ec;transform:scaleX(0.8619);transform-origin:0 0;">57.4</div>
<div class="a" style="left:808.40px;top:406.46px;font-size:6.8px;line-height:10px;color:#fff3ec;transform:scaleX(0.8619);transform-origin:0 0;">64.9</div>
<div class="a" style="left:880.45px;top:377.46px;font-size:6.8px;line-height:10px;color:#fff3ec;transform:scaleX(0.8619);transform-origin:0 0;">82.4</div>
<div class="a" style="left:952.50px;top:373.98px;font-size:6.8px;line-height:10px;color:#fff3ec;transform:scaleX(0.8619);transform-origin:0 0;">84.5</div>
<div class="a" style="left:620.58px;top:524.90px;font-size:6.2px;line-height:9px;color:#555;">0.0</div>
<div class="a" style="left:617.14px;top:508.33px;font-size:6.2px;line-height:9px;color:#555;">10.0</div>
<div class="a" style="left:617.14px;top:491.76px;font-size:6.2px;line-height:9px;color:#555;">20.0</div>
<div class="a" style="left:617.14px;top:475.19px;font-size:6.2px;line-height:9px;color:#555;">30.0</div>
<div class="a" style="left:617.14px;top:458.62px;font-size:6.2px;line-height:9px;color:#555;">40.0</div>
<div class="a" style="left:617.14px;top:442.05px;font-size:6.2px;line-height:9px;color:#555;">50.0</div>
<div class="a" style="left:617.14px;top:425.48px;font-size:6.2px;line-height:9px;color:#555;">60.0</div>
<div class="a" style="left:617.14px;top:408.91px;font-size:6.2px;line-height:9px;color:#555;">70.0</div>
<div class="a" style="left:617.14px;top:392.34px;font-size:6.2px;line-height:9px;color:#555;">80.0</div>
<div class="a" style="left:617.14px;top:375.77px;font-size:6.2px;line-height:9px;color:#555;">90.0</div>
<div class="a" style="left:613.67px;top:359.20px;font-size:6.2px;line-height:9px;color:#555;">100.0</div>
<div class="a" style="left:662.75px;top:534.70px;font-size:6.6px;line-height:10px;color:#555;transform:scaleX(1.0555);transform-origin:0 0;">2019</div>
<div class="a" style="left:734.80px;top:534.70px;font-size:6.6px;line-height:10px;color:#555;transform:scaleX(1.0555);transform-origin:0 0;">2020</div>
<div class="a" style="left:806.85px;top:534.70px;font-size:6.6px;line-height:10px;color:#555;transform:scaleX(1.0555);transform-origin:0 0;">2021</div>
<div class="a" style="left:878.90px;top:534.70px;font-size:6.6px;line-height:10px;color:#555;transform:scaleX(1.0555);transform-origin:0 0;">2022</div>
<div class="a" style="left:950.95px;top:534.70px;font-size:6.6px;line-height:10px;color:#555;transform:scaleX(1.0555);transform-origin:0 0;">2023</div>
<div class="a" style="left:827.00px;top:352.10px;font-size:7.0px;line-height:10px;color:#555;transform:scaleX(0.8892);transform-origin:0 0;">EBITDA</div>
<div class="a" style="left:885.20px;top:352.10px;font-size:7.0px;line-height:10px;color:#555;transform:scaleX(0.9686);transform-origin:0 0;">Income Taxes</div>
<div class="a" style="left:943.20px;top:352.10px;font-size:7.0px;line-height:10px;color:#555;transform:scaleX(1.0346);transform-origin:0 0;">Net Profit</div>
</body></html>
